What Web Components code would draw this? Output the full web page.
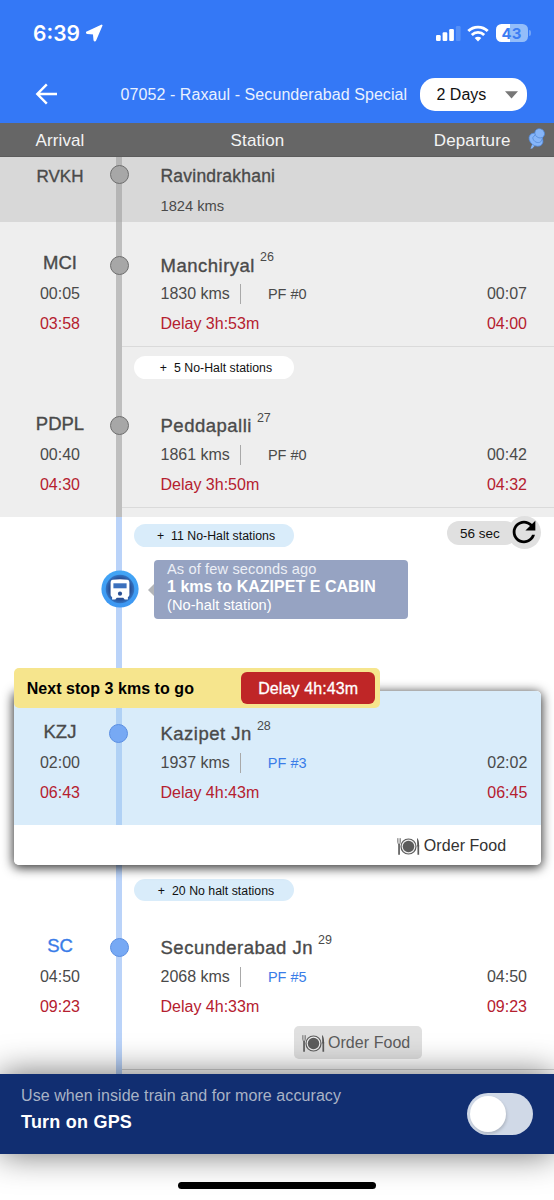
<!DOCTYPE html>
<html lang="en">
<head>
<meta charset="utf-8">
<title>07052 - Raxaul - Secunderabad Special</title>
<style>
    html, body {
        margin: 0;
        padding: 0;
    }
    body {
        width: 554px;
        height: 1200px;
        overflow: hidden;
        background: #fff;
        color: #4a4a4a;
        font-family: "Liberation Sans", Arial, sans-serif;
        font-size: 16px;
    }
</style>
</head>
<body>
<train-app>
    <status-bar></status-bar>
    <app-bar days="2 Days">07052 - Raxaul - Secunderabad Special</app-bar>
    <column-header></column-header>

    <station-row class="passed top" code="RVKH" name="Ravindrakhani" kms="1824 kms"></station-row>
    <station-row class="passed" code="MCI" name="Manchiryal" stop="26" kms="1830 kms" pf="PF #0"
        arr="00:05" arr-act="03:58" delay="Delay 3h:53m" dep="00:07" dep-act="04:00"></station-row>
    <halt-row class="passed" label="5 No-Halt stations"></halt-row>
    <station-row class="passed" code="PDPL" name="Peddapalli" stop="27" kms="1861 kms" pf="PF #0"
        arr="00:40" arr-act="04:30" delay="Delay 3h:50m" dep="00:42" dep-act="04:32"></station-row>
    <live-status halts="11 No-Halt stations" timer="56 sec">
        <span slot="when">As of few seconds ago</span>
        <span slot="where">1 kms to KAZIPET E CABIN</span>
        <span slot="note">(No-halt station)</span>
    </live-status>
    <next-stop message="Next stop 3 kms to go" delay="Delay 4h:43m">
        <station-row class="next" code="KZJ" name="Kazipet Jn" stop="28" kms="1937 kms" pf="PF #3"
            arr="02:00" arr-act="06:43" delay="Delay 4h:43m" dep="02:02" dep-act="06:45"></station-row>
        <order-food slot="action">Order Food</order-food>
    </next-stop>
    <halt-row class="after" label="20 No halt stations"></halt-row>
    <station-row class="last" code="SC" name="Secunderabad Jn" stop="29" kms="2068 kms" pf="PF #5"
        arr="04:50" arr-act="09:23" delay="Delay 4h:33m" dep="04:50" dep-act="09:23">
        <order-food class="chip">Order Food</order-food>
    </station-row>

    <gps-bar slot="footer" hint="Use when inside train and for more accuracy">Turn on GPS</gps-bar>
    <home-indicator slot="footer"></home-indicator>
</train-app>

<script>
(function() {
    function define(name, render) {
        customElements.define(name, class extends HTMLElement {
            constructor() {
                super();
                this.attachShadow({ mode: 'open' });
            }

            connectedCallback() {
                this.shadowRoot.innerHTML = render(this);
            }
        });
    }

    const attr = (el, name) => el.getAttribute(name) || '';

    define('train-app', () => `
        <style>
            :host {
                display: flex;
                flex-direction: column;
                width: 554px;
                height: 1200px;
            }
            main {
                height: 1074px;
                flex: none;
                display: flex;
                flex-direction: column;
            }
            footer {
                flex: 1;
                display: flex;
                flex-direction: column;
                position: relative;
                z-index: 5;
            }
        </style>
        <main><slot></slot></main>
        <footer><slot name="footer"></slot></footer>
    `);

    define('status-bar', () => `
        <style>
            :host {
                display: flex;
                flex: none;
                box-sizing: border-box;
                height: 66px;
                padding: 0 23.500px 0 33px;
                align-items: center;
                background: #3478f6;
                color: #fff;
                font-family: Inter, "Liberation Sans", sans-serif;
            }
            .time {
                font-size: 21px;
                font-weight: 600;
                width: 53px;
            }
            .spacer {
                flex: 1;
            }
            .battery {
                width: 32px;
                height: 18.500px;
                box-sizing: border-box;
                margin-left: 6.500px;
                border-radius: 5.500px;
                background: linear-gradient(90deg, #fff 44%, #94bdf9 44%);
                color: #3c7df3;
                font-size: 15px;
                font-weight: 700;
                line-height: 19px;
                text-align: center;
            }
            .nub {
                width: 2px;
                height: 6px;
                margin-left: 1px;
                border-radius: 0 2px 2px 0;
                background: #6fa2f8;
            }
        </style>
        <span class="time">6:39</span>
        <svg width="17" height="18" viewBox="0 0 17 18"><path d="M15.600 1.500 1.100 8.300q-.6.5.2.8l6.500.5.6 6.500q.5.900.9.100z" fill="#fff" stroke="#fff" stroke-width="1.800" stroke-linejoin="round"/></svg>
        <span class="spacer"></span>
        <svg width="25" height="17" viewBox="0 0 25 17" fill="#fff">
            <rect x="0" y="10" width="4.700" height="6" rx="1.200"/>
            <rect x="6.600" y="7.200" width="4.700" height="8.800" rx="1.200"/>
            <rect x="13.200" y="4" width="4.700" height="12" rx="1.200"/>
            <rect x="19.900" y="1" width="4.700" height="15" rx="1.200" fill="#5590f8"/>
        </svg>
        <svg width="22" height="17" viewBox="0 0 22 17" style="margin-left:6px" fill="none" stroke="#fff" stroke-width="2.800">
            <path d="M1.300 6.100a13.700 13.700 0 0 1 19.400 0"/>
            <path d="M4.800 9.900a8.800 8.800 0 0 1 12.400 0"/>
            <path d="M11 16.500 7.700 13.100a4.700 4.700 0 0 1 6.600 0z" fill="#fff" stroke="none"/>
        </svg>
        <span class="battery">43</span><span class="nub"></span>
    `);

    define('app-bar', (el) => `
        <style>
            :host {
                display: flex;
                flex: none;
                box-sizing: border-box;
                height: 57px;
                padding: 0 27px 0 35px;
                align-items: center;
                background: #3478f6;
                color: #e9f1ff;
            }
            .title {
                flex: 1;
                margin-left: 62.500px;
                letter-spacing: .08px;
                white-space: nowrap;
            }
            .days {
                display: flex;
                box-sizing: border-box;
                width: 107px;
                height: 33px;
                padding: 0 9.500px 0 16.500px;
                align-items: center;
                justify-content: space-between;
                border-radius: 15px;
                background: #fff;
                color: #111;
            }
        </style>
        <svg width="23" height="23" viewBox="0 0 23 23" fill="none" stroke="#fff" stroke-width="2.400"><path d="M11.800 1.300 2.300 11l9.500 9.700M2.300 11H22"/></svg>
        <span class="title"><slot></slot></span>
        <span class="days">${attr(el, 'days')}<svg width="13" height="8" viewBox="0 0 13 8"><path d="M0 .2h13L6.500 7.500z" fill="#777"/></svg></span>
    `);

    define('column-header', () => `
        <style>
            :host {
                display: grid;
                flex: none;
                grid-template-columns: 120px 275px 115.500px 1fr;
                box-sizing: border-box;
                height: 34px;
                align-items: center;
                border-bottom: 1px solid #5c5c5c;
                background: #666;
                color: #f4f4f4;
                font-size: 17px;
                letter-spacing: .12px;
                padding-top: 3px;
            }
            span {
                text-align: center;
            }
            .end {
                text-align: right;
            }
            svg {
                display: block;
                margin: -4px 0 0 17.500px;
            }
        </style>
        <span>Arrival</span><span>Station</span><span class="end">Departure</span>
        <svg width="18" height="22" viewBox="0 0 18 22" fill="#86b5f8" stroke="#4f86d6" stroke-width=".7">
            <path d="M4.800 14.500 2.500 20.800l1.800-.2 4.500-5z" stroke="none"/>
            <ellipse cx="8" cy="11.700" rx="7.600" ry="5.900" transform="rotate(38 8 11.700)"/>
            <path d="M4.700 9.800 8.500 5l6.300 4.500-2 4.300c-3 1.900-7.200.2-8.100-4z"/>
            <ellipse cx="11.700" cy="5.300" rx="5" ry="4.500" transform="rotate(35 11.700 5.300)"/>
        </svg>
    `);

    define('station-row', (el) => `
        <style>
            :host {
                --inset: 0px;
                --rail: #bad3f9;
                --dot: #77a9f4;
                --ring: #5b8fe3;
                display: grid;
                flex: none;
                grid-template-columns: calc(20px - var(--inset)) 80px 16px 6px 1fr;
                box-sizing: border-box;
                height: 134.500px;
            }
            :host(.passed) {
                --rail: #bebebe;
                --dot: #a7a7a7;
                --ring: #6e6e6e;
                background: #eee;
            }
            :host(.passed) .body {
                border-color: #dadada;
            }
            :host(.passed[code="MCI"]) {
                height: 125px;
            }
            :host(.top) {
                --rail: #b5b5b5;
                height: 65px;
                background: #d8d8d8;
            }
            :host(.next) {
                --inset: 13.670px;
                --rail: #b0d1f5;
                height: 134px;
                background: #d9ecfa;
            }
            :host(.last) {
                height: 169px;
            }
            .code-col {
                grid-column: 2;
                display: flex;
                flex-direction: column;
                align-items: center;
                padding-top: 26px;
                white-space: nowrap;
            }
            .code-col span, .line {
                height: 30px;
                line-height: 30px;
            }
            .code-col .code {
                height: 31px;
                font-size: 18.500px;
                -webkit-text-stroke: .35px currentColor;
            }
            .rail {
                grid-column: 4;
                background: var(--rail);
            }
            .dot {
                width: 19px;
                height: 19px;
                box-sizing: border-box;
                margin: 33.500px 0 0 -6.500px;
                border: 1.500px solid var(--ring);
                border-radius: 50%;
                background: var(--dot);
            }
            .body {
                grid-column: 5;
                display: flex;
                flex-direction: column;
                padding: 28px calc(27px - var(--inset)) 0 38.500px;
                border-bottom: 1px solid #d4d4d4;
            }
            .line {
                display: flex;
                align-items: center;
            }
            .name {
                font-size: 18.500px;
                letter-spacing: .5px;
                -webkit-text-stroke: .35px currentColor;
                margin-bottom: -1px;
                padding-top: 1px;
                height: 29px;
            }
            .name sup {
                align-self: flex-start;
                margin: -9px 0 0 5px;
                font-size: 12.500px;
                letter-spacing: 0;
                -webkit-text-stroke: 0;
            }
            .bar {
                width: 1px;
                height: 20px;
                margin: 0 27px 0 10px;
                background: #a9a9a9;
            }
            .pf {
                font-size: 14.500px;
            }
            :host(.next) .pf, :host(.last) .pf, :host(.last) .code {
                color: #3a7ce8;
            }
            .dep {
                margin-left: auto;
            }
            .late {
                color: #b5202f;
            }
            :host(.top) .code-col {
                padding-top: 5px;
            }
            :host(.top) .code {
                font-size: 17px;
            }
            :host(.top) .dot {
                margin-top: 8px;
            }
            :host(.top) .body {
                padding-top: 4px;
                border: 0;
            }
            :host(.top) .name {
                margin: 0;
                padding: 0;
                height: 30px;
                font-size: 17.500px;
                letter-spacing: .22px;
            }
            :host(.top) .kms {
                font-size: 14.700px;
            }
            :host(.top) .bar {
                display: none;
            }
            /* separator sits a little above the end of the block */
            :host([code="PDPL"]) .body {
                margin-bottom: 9.500px;
            }
            :host(.next) .body {
                border: 0;
            }
            :host(.last) .body {
                margin-bottom: 4px;
            }
            ::slotted(order-food) {
                margin: 4px 0 0 133.500px;
            }
        </style>
        <div class="code-col">
            <span class="code">${attr(el, 'code')}</span>
            <span>${attr(el, 'arr')}</span>
            <span class="late">${attr(el, 'arr-act')}</span>
        </div>
        <div class="rail"><div class="dot"></div></div>
        <div class="body">
            <div class="line name">${attr(el, 'name')}<sup>${attr(el, 'stop')}</sup></div>
            <div class="line"><span class="kms">${attr(el, 'kms')}</span><i class="bar"></i><span class="pf">${attr(el, 'pf')}</span><span class="dep">${attr(el, 'dep')}</span></div>
            <div class="line late"><span>${attr(el, 'delay')}</span><span class="dep">${attr(el, 'dep-act')}</span></div>
            <slot></slot>
        </div>
    `);

    define('halt-pill', () => `
        <style>
            :host {
                display: flex;
                flex: none;
                box-sizing: border-box;
                width: 160px;
                height: 22.500px;
                align-items: center;
                justify-content: center;
                gap: 7px;
                padding: 1px 0 0 4px;
                border-radius: 12px;
                background: var(--pill, #d9ecfa);
                color: #111;
                font-size: 12.300px;
                letter-spacing: .02px;
                white-space: nowrap;
            }
        </style>
        <span>+</span><span><slot></slot></span>
    `);

    define('halt-row', (el) => `
        <style>
            :host {
                display: flex;
                flex: none;
                box-sizing: border-box;
                height: 35.670px;
                padding-left: 116px;
            }
            :host(.passed) {
                --pill: #fff;
                --rail: #bebebe;
                background: #eee;
            }
            :host(.after) {
                --rail: #bad3f9;
                height: 40px;
            }
            .rail {
                width: 6px;
                background: var(--rail);
            }
            halt-pill {
                margin: 9px 0 0 12px;
            }
            :host(.after) halt-pill {
                margin-top: 14px;
            }
        </style>
        <div class="rail"></div>
        <halt-pill>${attr(el, 'label')}</halt-pill>
    `);

    define('live-status', (el) => `
        <style>
            :host {
                display: grid;
                flex: none;
                grid-template-columns: 116px 6px 1fr;
                height: 173.830px;
            }
            .rail {
                grid-column: 2;
                background: #bad3f9;
            }
            .train {
                display: block;
                margin: 53px 0 0 -14.700px;
            }
            .content {
                padding: 0 13px 0 12px;
            }
            .top {
                display: flex;
                height: 43px;
                align-items: flex-start;
                justify-content: space-between;
            }
            .top halt-pill {
                margin-top: 7px;
            }
            .refresh {
                display: flex;
                margin-top: -1px;
                align-items: center;
                color: #111;
                font-size: 13.500px;
            }
            .timer {
                box-sizing: border-box;
                width: 70px;
                height: 24px;
                padding-left: 13px;
                border-radius: 12px;
                background: #e0e0e0;
                line-height: 25px;
            }
            .circle {
                display: flex;
                width: 33px;
                height: 33px;
                margin-left: -9px;
                align-items: center;
                justify-content: center;
                border-radius: 50%;
                background: #e0e0e0;
            }
            .circle svg {
                flex: none;
                margin: -2px 0 0 -2px;
            }
            .tip {
                display: flex;
                align-items: center;
                margin-left: 13.500px;
            }
            .tip::before {
                content: "";
                border: 6px solid transparent;
                border-left: 0;
                border-right-color: #b3b5b8;
            }
            .box {
                display: flex;
                flex-direction: column;
                box-sizing: border-box;
                width: 254.500px;
                height: 59px;
                padding-left: 13.500px;
                border-radius: 4px;
                background: #96a3c2;
                color: #fff;
                white-space: nowrap;
            }
            .when {
                margin-top: 1px;
                font-size: 14.600px;
                letter-spacing: .13px;
                line-height: 17px;
                color: #eceff6;
            }
            .where {
                font-weight: bold;
                letter-spacing: .03px;
                line-height: 18px;
            }
            .note {
                font-size: 14.600px;
                letter-spacing: .05px;
                line-height: 18px;
            }
        </style>
        <div class="rail">
            <svg class="train" width="38" height="38" viewBox="0 0 38 38">
                <defs>
                    <linearGradient id="rim" x1="0" y1="0" x2="0" y2="1"><stop offset="0" stop-color="#42a5f5"/><stop offset="1" stop-color="#3e97f2"/></linearGradient>
                    <radialGradient id="core"><stop offset=".72" stop-color="#294f94"/><stop offset="1" stop-color="#3274c4"/></radialGradient>
                </defs>
                <circle cx="19" cy="19" r="18.600" fill="url(#rim)"/>
                <circle cx="19" cy="19" r="14.300" fill="url(#core)"/>
                <path d="M11.500 9.700q7.500-.8 15 0 1.900.4 1.900 2.600v12.400q0 1.900-1.500 2.300v2.500h-3.200l-1.500-1.700h-6.400l-1.500 1.700h-3.200V27q-1.500-.4-1.500-2.300V12.300q0-2.200 1.900-2.600z" fill="#fff"/>
                <path d="M12.400 13.300h13.200v5H12.400z" fill="#3b70bd"/>
                <circle cx="19" cy="23.700" r="2.100" fill="#294f94"/>
            </svg>
        </div>
        <div class="content">
            <div class="top">
                <halt-pill>${attr(el, 'halts')}</halt-pill>
                <div class="refresh">
                    <span class="timer">${attr(el, 'timer')}</span>
                    <span class="circle"><svg width="34" height="34" viewBox="0 0 24 24"><path d="M17.650 6.350C16.200 4.900 14.210 4 12 4c-4.420 0-7.990 3.580-7.990 8s3.570 8 7.990 8c3.730 0 6.840-2.550 7.730-6h-2.080c-.82 2.330-3.040 4-5.650 4-3.310 0-6-2.690-6-6s2.690-6 6-6c1.660 0 3.140.69 4.220 1.780L13 11h7V4l-2.350 2.350z"/></svg></span>
                </div>
            </div>
            <div class="tip">
                <div class="box">
                    <slot class="when" name="when" style="display:block"></slot>
                    <slot class="where" name="where" style="display:block"></slot>
                    <slot class="note" name="note" style="display:block"></slot>
                </div>
            </div>
        </div>
    `);

    define('next-stop', (el) => `
        <style>
            :host {
                display: block;
                flex: none;
                box-sizing: border-box;
                position: relative;
                z-index: 1;
                height: 174px;
                margin: 0 13.330px 0 13.670px;
                border-radius: 5px;
                box-shadow: 0 2px 11px 1px rgba(0, 0, 0, .8);
            }
            .card {
                display: flex;
                flex-direction: column;
                height: 174px;
                overflow: hidden;
                border-radius: 5px;
                background: #fff;
            }
            .action {
                display: flex;
                box-sizing: border-box;
                height: 40px;
                align-items: center;
                justify-content: flex-end;
                padding: 3px 34.500px 0 0;
                color: #333;
            }
            /* the banner hangs over the top edge of the card */
            .banner {
                position: absolute;
                left: 0;
                top: -22.500px;
                display: flex;
                box-sizing: border-box;
                width: 366.500px;
                height: 40px;
                padding: 0 5px 0 13px;
                align-items: center;
                justify-content: space-between;
                border-radius: 5px;
                background: #f6e58d;
                color: #000;
                font-weight: bold;
                letter-spacing: .05px;
            }
            .banner span:first-child {
                padding-top: 2px;
            }
            .delay {
                width: 134px;
                height: 32px;
                border-radius: 6px;
                background: #bf2627;
                color: #fff;
                font-weight: normal;
                letter-spacing: .1px;
                line-height: 34px;
                text-align: center;
                -webkit-text-stroke: .3px #fff;
            }
        </style>
        <div class="card">
            <slot></slot>
            <div class="action"><slot name="action"></slot></div>
        </div>
        <div class="banner"><span>${attr(el, 'message')}</span><span class="delay">${attr(el, 'delay')}</span></div>
    `);

    define('order-food', () => `
        <style>
            :host {
                display: flex;
                flex: none;
                align-items: center;
                gap: 3.500px;
                letter-spacing: .05px;
            }
            :host(.chip) {
                box-sizing: border-box;
                width: 127.500px;
                height: 33.500px;
                padding: 1px 0 0 7.500px;
                border-radius: 5px;
                background: #e0e0e0;
                color: #5c5c5c;
            }
        </style>
        <svg width="23" height="19" viewBox="0 0 23 19">
            <path d="M.6 1.200v4.300q0 1.300 1.200 1.600M3.500 1.200v4.300q0 1.300-1.200 1.600M2.050 1.200v6" fill="none" stroke="#777" stroke-width=".8"/>
            <path d="M2.050 7v10.800M21.300 8v9.800" stroke="#5c5c5c" stroke-width="1.700"/>
            <path d="M20 1q2.300 1.500 2.100 8.500h-1.800z" fill="#555"/>
            <circle cx="11.500" cy="9.500" r="7.500" fill="#eee" stroke="#5c5c5c" stroke-width="1.200"/>
            <circle cx="11.500" cy="9.500" r="5.700" fill="#5c5c5c"/>
        </svg>
        <span><slot></slot></span>
    `);

    define('gps-bar', (el) => `
        <style>
            :host {
                display: flex;
                flex: none;
                box-sizing: border-box;
                height: 80px;
                padding: 0 21.500px 0 21px;
                align-items: center;
                justify-content: space-between;
                background: #112e71;
                box-shadow: 0 0 34px rgba(0, 0, 0, .58);
                color: #fff;
            }
            .text {
                display: flex;
                flex-direction: column;
                gap: 6px;
                margin-top: -10px;
                white-space: nowrap;
            }
            .hint {
                color: #a9b3c6;
                letter-spacing: .08px;
                line-height: 19px;
            }
            .title {
                font-size: 18px;
                font-weight: bold;
                letter-spacing: .22px;
                line-height: 22px;
            }
            .toggle {
                box-sizing: border-box;
                width: 65.500px;
                height: 41.500px;
                padding: 2.500px;
                border-radius: 21px;
                background: #d0d9e7;
            }
            .knob {
                width: 36.500px;
                height: 36.500px;
                border-radius: 50%;
                background: #fff;
                box-shadow: 1px 2px 3px rgba(0, 0, 0, .15);
            }
        </style>
        <div class="text"><span class="hint">${attr(el, 'hint')}</span><span class="title"><slot></slot></span></div>
        <div class="toggle"><div class="knob"></div></div>
    `);

    define('home-indicator', () => `
        <style>
            :host {
                display: flex;
                flex: 1;
                justify-content: center;
                padding-top: 28px;
            }
            i {
                width: 198px;
                height: 7px;
                border-radius: 4px;
                background: #000;
            }
        </style>
        <i></i>
    `);
})();
</script>
</body>
</html>
